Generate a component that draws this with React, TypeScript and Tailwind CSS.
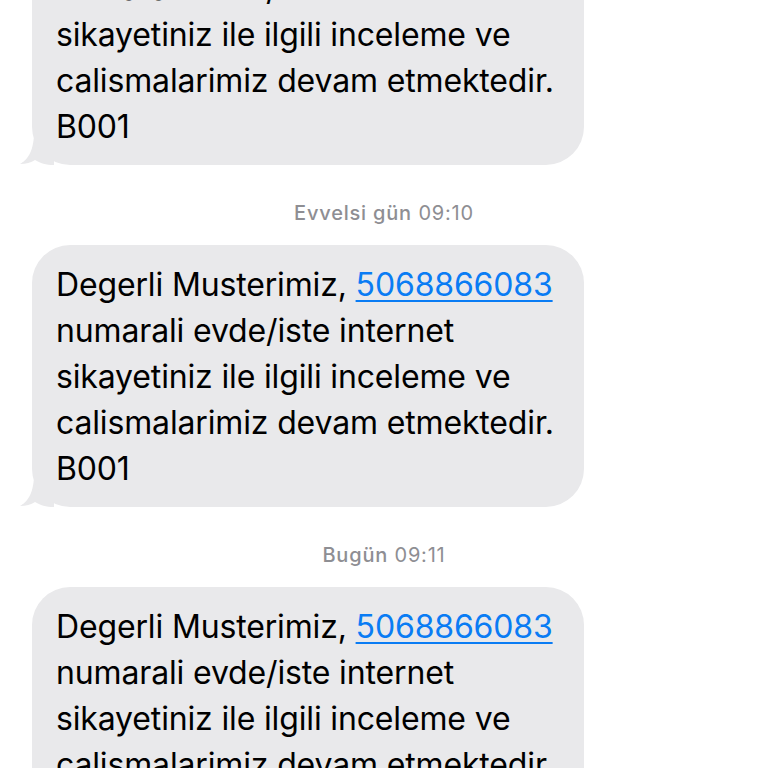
const lines = [
  "numarali evde/iste internet",
  "sikayetiniz ile ilgili inceleme ve",
  "calismalarimiz devam etmektedir.",
  "B001",
];

function Tail() {
  return (
    <svg
      className="absolute -left-[12px] bottom-0"
      width="34"
      height="30"
      viewBox="0 0 34 30"
    >
      <path d="M14 0 L34 0 L34 30 C26 30 20 28 15 25 C11 27.5 6 29 0 29 C7 25 13 18 14 0 Z" fill="#e9e9eb" />
    </svg>
  );
}

function Bubble() {
  return (
    <div className="relative w-[552px] ml-8">
      <div className="relative z-10 bg-[#e9e9eb] rounded-[38px] pl-6 pr-4 pt-[17px] pb-[15px] text-[32px] tracking-[-0.15px] leading-[46px] text-black whitespace-nowrap">
        <div>
          Degerli Musterimiz,{" "}
          <span className="text-[#0a7cf4] underline decoration-2 underline-offset-4">5068866083</span>
        </div>
        {lines.map((l) => (
          <div key={l}>{l}</div>
        ))}
      </div>
      <Tail />
    </div>
  );
}

function Stamp({ day, time }: { day: string; time: string }) {
  return (
    <div className="text-center text-[20px] tracking-[0.8px] leading-6 text-[#8e8e93] mt-9 mb-5">
      <span className="font-medium">{day}</span> <span>{time}</span>
    </div>
  );
}

export default function App() {
  return (
    <div
      className="w-[768px] h-[768px] overflow-hidden bg-white"
      style={{ fontFamily: "Inter, 'Noto Sans', sans-serif" }}
    >
      <div className="-mt-[97px]">
        <Bubble />
        <Stamp day="Evvelsi gün" time="09:10" />
        <Bubble />
        <Stamp day="Bugün" time="09:11" />
        <Bubble />
      </div>
    </div>
  );
}
